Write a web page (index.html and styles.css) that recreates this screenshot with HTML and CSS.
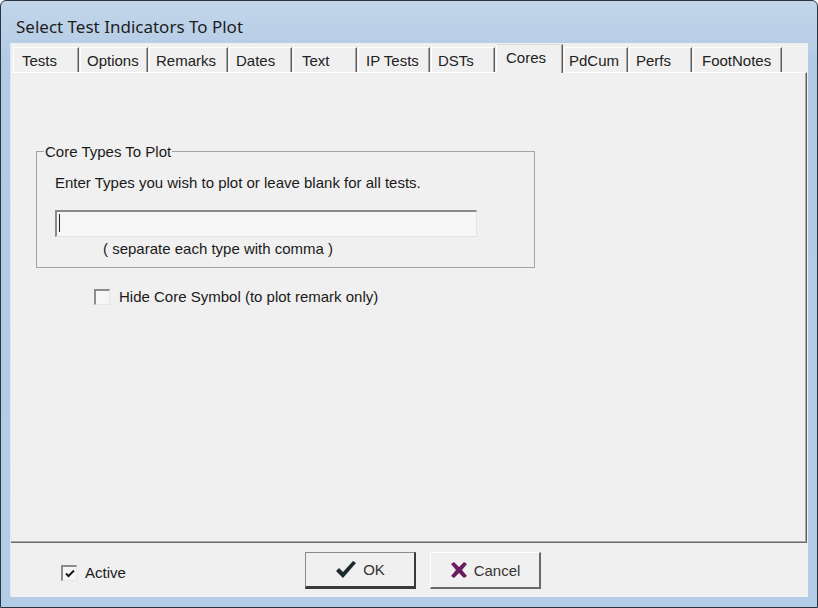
FILE: index.html
```html
<!DOCTYPE html>
<html lang="en">
<head>
  <meta charset="UTF-8">
  <title>Select Test Indicators To Plot</title>
  <link rel="stylesheet" href="styles.css">
</head>
<body>
<div class="window">
  <div class="titlebar">Select Test Indicators To Plot</div>
  <div class="client">
    <div class="tabs">
      <div class="tab">Tests</div>
      <div class="tab">Options</div>
      <div class="tab">Remarks</div>
      <div class="tab">Dates</div>
      <div class="tab">Text</div>
      <div class="tab">IP Tests</div>
      <div class="tab">DSTs</div>
      <div class="tab active">Cores</div>
      <div class="tab">PdCum</div>
      <div class="tab">Perfs</div>
      <div class="tab">FootNotes</div>
    </div>

    <div class="page">
      <fieldset class="group">
        <legend>Core Types To Plot</legend>
        <div class="hint">Enter Types you wish to plot or leave blank for all tests.</div>
        <div class="textbox"><span class="caret"></span></div>
        <div class="note">( separate each type with comma )</div>
      </fieldset>
      <label class="check-row hide-row">
        <span class="checkbox"></span>
        Hide Core Symbol (to plot remark only)
      </label>
    </div>

    <div class="footer">
      <label class="check-row active-row">
        <span class="checkbox">
          <svg width="10" height="9" viewBox="0 0 10 9"><path d="M1 4.5 L3.5 7 L9 1.5" fill="none" stroke="#1a1a1a" stroke-width="2"/></svg>
        </span>
        Active
      </label>
      <div class="buttons">
        <button class="btn default">
          <svg width="22" height="20" viewBox="0 0 22 20"><path d="M1 11 L4 8 L8 12 L18 1 L21 3 L8 18 Z" fill="#1c2b30"/></svg>
          OK
        </button>
        <button class="btn">
          <svg width="18" height="18" viewBox="0 0 18 18"><path d="M1 3 L4 1 L9 6 L14 1 L17 3 L12 9 L17 15 L14 17 L9 12 L4 17 L1 15 L6 9 Z" fill="#6a1c5c"/></svg>
          Cancel
        </button>
      </div>
    </div>
  </div>
</div>
</body>
</html>
```

FILE: styles.css
```css
html, body {
  margin: 0;
  padding: 0;
  background: #fff;
}
body {
  font-family: "Liberation Sans", Arial, sans-serif;
  font-size: 15px;
  color: #1a1a1a;
}
.window {
  width: 818px;
  height: 608px;
  box-sizing: border-box;
  border: 1px solid #2b3440;
  border-radius: 6px 6px 0 0;
  background: linear-gradient(#c3d6ea, #b2cbe5 60px, #b4cde7);
  display: flex;
  flex-direction: column;
}
.titlebar {
  height: 42px;
  padding-left: 15px;
  box-sizing: border-box;
  padding-top: 16px;
  font-family: "Noto Sans", sans-serif;
  font-size: 17px;
  color: #1e1e1e;
  line-height: 20px;
}
.client {
  flex: 1;
  margin: 0 9px 10px 9px;
  background: #f0f0f0;
  display: flex;
  flex-direction: column;
  border-left: 1px solid #dfe8f2;
}
.tabs {
  height: 29px;
  display: flex;
  padding-left: 2px;
  gap: 1px;
  align-items: flex-end;
}
.tab {
  height: 25px;
  box-sizing: border-box;
  padding: 4px 0 0 8px;
  border-top: 1px solid #fff;
  border-left: 1px solid #fff;
  border-right: 1px solid #5e5e5e;
  box-shadow: inset -1px 0 #a8a8a8;
  line-height: 17px;
  white-space: nowrap;
  color: #222;
}
.tab:nth-child(1) { width: 66px; }
.tab:nth-child(2) { width: 68px; padding-left: 6px; }
.tab:nth-child(3) { width: 79px; padding-left: 6px; }
.tab:nth-child(4) { width: 63px; padding-left: 6px; }
.tab:nth-child(5) { width: 64px; }
.tab:nth-child(6) { width: 72px; padding-left: 7px; }
.tab:nth-child(7) { width: 64px; padding-left: 6px; }
.tab:nth-child(8) { width: 67px; }
.tab:nth-child(9) { width: 64px; padding-left: 4px; }
.tab:nth-child(10) { width: 63px; padding-left: 6px; }
.tab:nth-child(11) { width: 89px; padding-left: 8px; }
.tab.active {
  height: 29px;
  margin-bottom: -1px;
  padding-top: 4px;
  padding-left: 9px;
  background: #f0f0f0;
  position: relative;
  border-top-color: #dcdcdc;
}
.page {
  height: 471px;
  box-sizing: border-box;
  border-top: 1px solid #fff;
  border-right: 1px solid #5e5e5e;
  border-bottom: 1px solid #6a6a6a;
  box-shadow: inset -1px -1px #a8a8a8;
  margin-right: 1px;
  padding: 70px 0 0 25px;
}
.group {
  width: 499px;
  height: 125px;
  box-sizing: border-box;
  margin: 0;
  padding: 0 0 0 7px;
  border: 1px solid #a3a3a3;
}
.group legend {
  padding: 0 1px;
  line-height: 17px;
}
.hint {
  margin: 14px 0 0 11px;
  line-height: 17px;
}
.textbox {
  width: 422px;
  height: 27px;
  box-sizing: border-box;
  margin: 19px 0 0 11px;
  background: #f7f7f7;
  border-top: 2px solid #8a8a8a;
  border-left: 2px solid #8a8a8a;
  border-right: 1px solid #e4e4e4;
  border-bottom: 1px solid #e4e4e4;
  padding: 2px 0 0 2px;
}
.caret {
  display: block;
  width: 1px;
  height: 18px;
  background: #222;
}
.note {
  margin: 3px 0 0 59px;
  line-height: 17px;
}
.checkbox {
  width: 16px;
  height: 16px;
  box-sizing: border-box;
  border-top: 2px solid #8c8c8c;
  border-left: 2px solid #8c8c8c;
  border-right: 1px solid #e6e6e6;
  border-bottom: 1px solid #e6e6e6;
  background: #f6f6f6;
  display: flex;
  align-items: center;
  justify-content: center;
}
.check-row {
  display: flex;
  align-items: center;
  gap: 9px;
  line-height: 17px;
}
.hide-row {
  margin: 20px 0 0 58px;
}
.footer {
  flex: 1;
  display: flex;
  align-items: flex-start;
  padding: 9px 0 0 50px;
}
.active-row {
  width: 244px;
  margin-top: 12px;
  gap: 8px;
}
.buttons {
  display: flex;
  gap: 14px;
}
.btn {
  width: 111px;
  height: 37px;
  box-sizing: border-box;
  font-family: "Liberation Sans", Arial, sans-serif;
  font-size: 15px;
  color: #333;
  background: #f0f0f0;
  border-top: 1px solid #fff;
  border-left: 1px solid #fff;
  border-right: 2px solid #6a6a6a;
  border-bottom: 2px solid #6a6a6a;
  display: flex;
  align-items: center;
  justify-content: center;
  gap: 6px;
  padding: 0;
}
.btn.default {
  border-top: 1px solid #8a8a8a;
  border-left: 1px solid #8a8a8a;
  border-right: 2px solid #3a3a3a;
  border-bottom: 3px solid #3a3a3a;
}
```
